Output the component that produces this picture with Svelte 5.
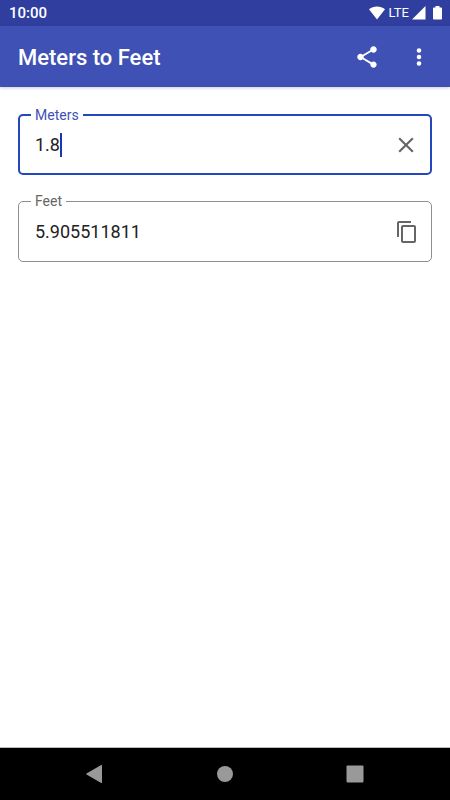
<script>
  let meters = $state('1.8');
  const feet = $derived(
    meters.trim() === '' || isNaN(Number(meters)) ? '' : String(Number((Number(meters) / 0.3048).toFixed(9)))
  );

  function copy() {
    navigator.clipboard?.writeText(feet);
  }
</script>

<div class="screen">
  <div class="status">
    <span class="time">10:00</span>
    <div class="signals">
      <svg width="18" height="16" viewBox="0 0 18 16" aria-hidden="true">
        <path d="M1 4.200C5.600.6 12.400.6 17 4.200L9 14.500z" fill="#fff" />
      </svg>
      <span class="lte">LTE</span>
      <svg width="14" height="16" viewBox="0 0 14 16" aria-hidden="true">
        <path d="M13.500 1v13.500H0z" fill="#fff" />
      </svg>
      <svg class="battery" width="9" height="16" viewBox="0 0 9 16" aria-hidden="true">
        <path d="M2.500 1h4v1.500h1.700c.5 0 .8.300.8.800v10.400c0 .5-.3.800-.8.800H.8c-.5 0-.8-.3-.8-.8V3.300c0-.5.3-.8.8-.8h1.700z" fill="#fff" />
      </svg>
    </div>
  </div>

  <header>
    <h1>Meters to Feet</h1>
    <button aria-label="Share">
      <svg width="26" height="26" viewBox="0 0 24 24" fill="#fff">
        <path d="M18 16.080c-.76 0-1.440.3-1.960.770L8.910 12.700c.050-.230.090-.460.090-.700s-.040-.470-.090-.700l7.050-4.110c.540.500 1.250.810 2.040.810 1.660 0 3-1.340 3-3s-1.340-3-3-3-3 1.340-3 3c0 .240.040.470.090.700L8.040 9.810C7.500 9.310 6.790 9 6 9c-1.660 0-3 1.340-3 3s1.340 3 3 3c.790 0 1.500-.310 2.040-.810l7.120 4.160c-.050.210-.080.430-.080.650 0 1.610 1.310 2.920 2.920 2.920s2.920-1.310 2.920-2.920-1.310-2.920-2.920-2.920z" />
      </svg>
    </button>
    <button aria-label="More options">
      <svg width="26" height="26" viewBox="0 0 24 24" fill="#fff">
        <circle cx="12" cy="6" r="2.100" />
        <circle cx="12" cy="12" r="2.100" />
        <circle cx="12" cy="18" r="2.100" />
      </svg>
    </button>
  </header>

  <main>
    <fieldset class="active">
      <legend><label for="meters">Meters</label></legend>
      <div class="row">
        <label class="entry">
          <input id="meters" type="text" inputmode="decimal" bind:value={meters} />
          <span class="caret"></span>
        </label>
        <button aria-label="Clear" onclick={() => (meters = '')}>
          <svg width="26" height="26" viewBox="0 0 24 24" fill="#666">
            <path d="M19 6.410L17.590 5 12 10.590 6.410 5 5 6.410 10.590 12 5 17.590 6.410 19 12 13.410 17.590 19 19 17.590 13.410 12z" />
          </svg>
        </button>
      </div>
    </fieldset>

    <fieldset>
      <legend><label for="feet">Feet</label></legend>
      <div class="row">
        <input id="feet" class="result" type="text" readonly value={feet} />
        <button aria-label="Copy" onclick={copy}>
          <svg width="24" height="24" viewBox="0 0 24 24" fill="#666">
            <path d="M16 1H4c-1.100 0-2 .9-2 2v14h2V3h12V1zm3 4H8c-1.100 0-2 .9-2 2v14c0 1.100.9 2 2 2h11c1.100 0 2-.9 2-2V7c0-1.100-.9-2-2-2zm0 16H8V7h11v14z" />
          </svg>
        </button>
      </div>
    </fieldset>
  </main>

  <nav>
    <button aria-label="Back">
      <svg width="20" height="20" viewBox="0 0 20 20" fill="#999">
        <path d="M17 1.600v16.800c0 .5-.4.700-.8.500L1.500 10.500c-.4-.2-.4-.8 0-1L16.200 1.100c.4-.2.8 0 .8.500z" />
      </svg>
    </button>
    <button aria-label="Home">
      <svg width="20" height="20" viewBox="0 0 20 20" fill="#999"><circle cx="10" cy="10" r="8" /></svg>
    </button>
    <button aria-label="Recent apps">
      <svg width="20" height="20" viewBox="0 0 20 20" fill="#999"><rect x="1.500" y="1.500" width="17" height="17" rx="1" /></svg>
    </button>
  </nav>
</div>

<style>
  :global(body) {
    margin: 0;
    background: #fff;
  }
  .screen {
    display: flex;
    flex-direction: column;
    min-height: 100vh;
    font-family: Roboto, 'Noto Sans', sans-serif;
    color: #222;
  }
  svg {
    display: block;
  }
  button {
    display: flex;
    align-items: center;
    justify-content: center;
    padding: 0;
    border: 0;
    background: none;
    cursor: pointer;
  }
  .status {
    display: flex;
    align-items: center;
    justify-content: space-between;
    height: 26px;
    padding: 0 8px 0 9px;
    background: #303f9f;
    color: #fff;
  }
  .time {
    font-size: 15px;
    font-weight: 500;
    line-height: 28px;
  }
  .signals {
    display: flex;
    align-items: center;
    gap: 3px;
  }
  .lte {
    font-size: 13px;
    line-height: 26px;
  }
  .battery {
    margin-left: 4px;
  }
  header {
    display: flex;
    align-items: center;
    height: 61px;
    padding: 0 5px 0 18px;
    background: #3f51b5;
    box-shadow: 0 1px 3px rgba(0, 0, 0, 0.2);
    color: #fff;
  }
  h1 {
    flex: 1;
    margin: 0;
    padding-top: 2px;
    font-size: 22px;
    font-weight: 500;
    line-height: 30px;
  }
  header button {
    width: 52px;
    height: 52px;
  }
  main {
    flex: 1;
    display: flex;
    flex-direction: column;
    gap: 18px;
    padding: 20px 18px;
  }
  fieldset {
    min-width: 0;
    margin: 0;
    padding: 0 12px 6px;
    border: 1px solid #8f8f8f;
    border-radius: 5px;
  }
  fieldset.active {
    padding: 0 11px 6px;
    border: 2px solid #2447bb;
  }
  legend {
    padding: 0 4px;
    color: #666;
    font-size: 14px;
    line-height: 16px;
  }
  .active legend {
    color: #3f51b5;
  }
  .row {
    display: flex;
    align-items: center;
    height: 44px;
    padding-left: 4px;
  }
  fieldset:not(.active) .row {
    height: 46px;
  }
  .entry {
    flex: 1;
    display: flex;
    align-items: center;
  }
  input {
    min-width: 0;
    padding: 0;
    border: 0;
    outline: 0;
    background: none;
    color: inherit;
    font: 18px/24px Roboto, 'Noto Sans', sans-serif;
  }
  .entry input {
    field-sizing: content;
    caret-color: transparent;
  }
  .result {
    flex: 1;
  }
  .caret {
    width: 2px;
    height: 24px;
    background: #1a36b0;
  }
  nav {
    display: flex;
    justify-content: center;
    gap: 78px;
    height: 52px;
    border-top: 1px solid #bbb;
    background: #000;
  }
  nav button {
    width: 52px;
  }
</style>
